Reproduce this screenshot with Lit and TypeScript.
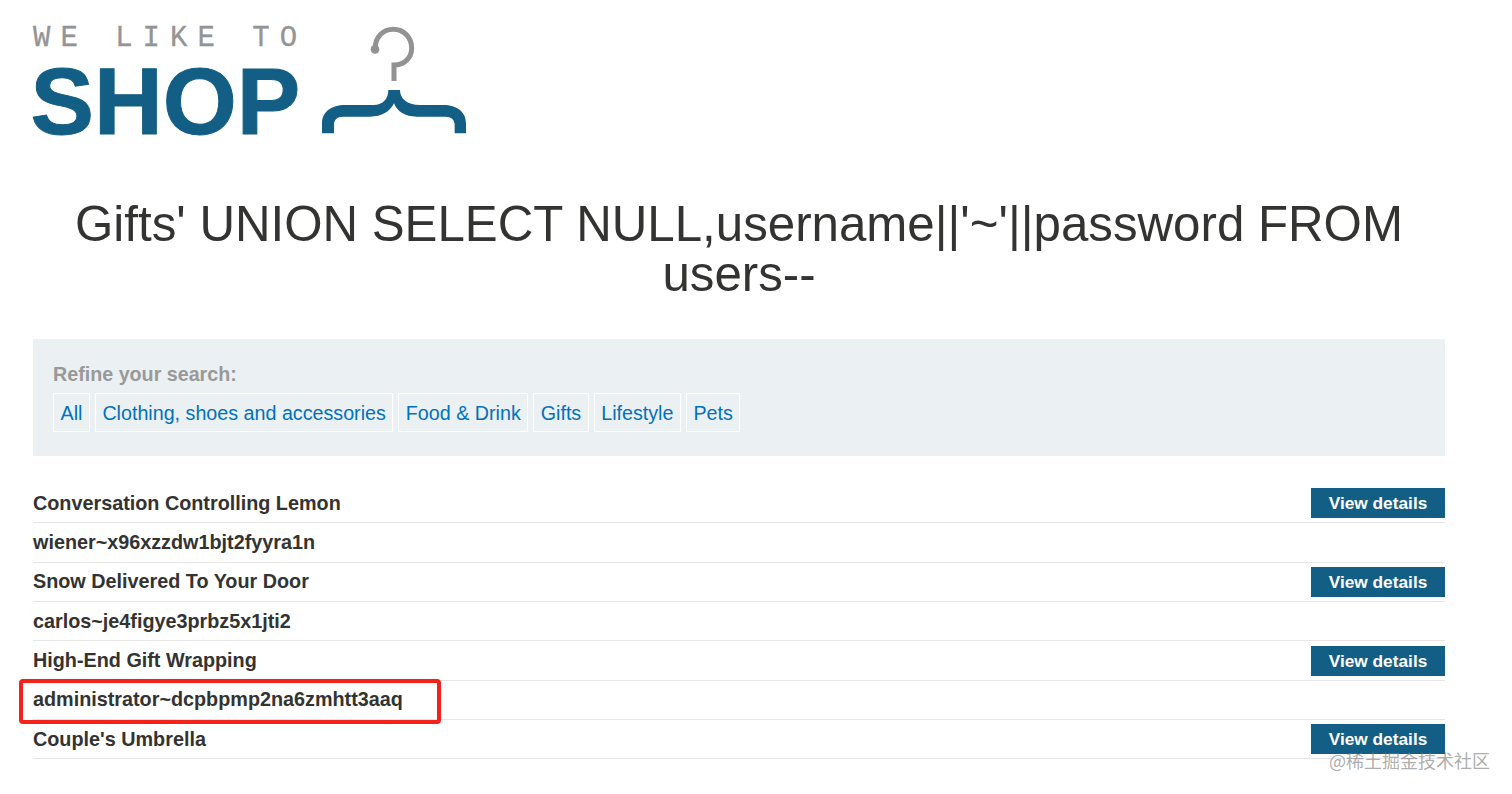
import { LitElement, html, css } from "lit";
import { customElement } from "lit/decorators.js";

const FILTERS = ["All", "Clothing, shoes and accessories", "Food & Drink", "Gifts", "Lifestyle", "Pets"];
const ROWS: { name: string; button: boolean; mark?: boolean }[] = [
  { name: "Conversation Controlling Lemon", button: true },
  { name: "wiener~x96xzzdw1bjt2fyyra1n", button: false },
  { name: "Snow Delivered To Your Door", button: true },
  { name: "carlos~je4figye3prbz5x1jti2", button: false },
  { name: "High-End Gift Wrapping", button: true },
  { name: "administrator~dcpbpmp2na6zmhtt3aaq", button: false, mark: true },
  { name: "Couple's Umbrella", button: true },
];

@customElement("app-root")
export class AppRoot extends LitElement {
  static styles = css`
    :host {
      display: block;
      position: relative;
      height: 794px;
      overflow: hidden;
      background: #fff;
      color: #333332;
      font-family: "Liberation Sans", Arial, sans-serif;
    }
    .page { padding: 0 67px 0 33px; }
    .logo { display: flex; height: 145px; padding-top: 15px; }
    .logo-text { width: 277px; display: flex; flex-direction: column; }
    .we {
      font-family: "Liberation Mono", monospace;
      font-size: 29px;
      line-height: 30px;
      letter-spacing: 10px;
      color: #949494;
      -webkit-text-stroke: 0.3px #949494;
      white-space: nowrap;
      margin-top: 9px;
    }
    .shop {
      font-weight: 700;
      font-size: 95.2px;
      line-height: 78px;
      color: #125e85;
      margin-top: 8px;
      margin-left: -2.5px;
      -webkit-text-stroke: 1px #125e85;
    }
    .hanger { display: block; width: 170px; height: 130px; }
    h1 {
      margin: 38.5px 0 0;
      font-weight: 400;
      font-size: 49.25px;
      line-height: 50.5px;
      text-align: center;
    }
    .filters {
      margin-top: 39.5px;
      height: 117px;
      box-sizing: border-box;
      background: #ebf0f3;
      padding: 24px 20px 0;
    }
    .label { font-weight: 700; font-size: 19.7px; line-height: 22px; color: #999; }
    .links { display: flex; gap: 5px; margin-top: 8px; }
    .links a {
      display: block;
      border: 1px solid #fff;
      padding: 0 6.5px;
      height: 39px;
      line-height: 38px;
      box-sizing: border-box;
      font-size: 19.7px;
      color: #0071bc;
    }
    .table { margin-top: 28px; }
    .row {
      position: relative;
      display: flex;
      align-items: center;
      justify-content: space-between;
      height: 39.35px;
      box-sizing: border-box;
      border-bottom: 1px solid #e6e6e6;
      font-weight: 700;
      font-size: 19.8px;
    }
    .btn {
      width: 134px;
      height: 30px;
      background: #125e85;
      color: #fff;
      font-size: 17.3px;
      line-height: 30px;
      text-align: center;
    }
    .mark {
      position: absolute;
      left: -14px;
      top: -1.4px;
      width: 422px;
      height: 45px;
      box-sizing: border-box;
      border: 4px solid #f5211b;
      border-radius: 4px;
    }
    .watermark {
      position: absolute;
      left: 1329px;
      top: 748px;
      font-family: "Noto Sans CJK SC", sans-serif;
      font-size: 18px;
      line-height: 24px;
      color: rgba(120, 120, 120, 0.62);
      white-space: nowrap;
    }
  `;

  render() {
    return html`
      <div class="page">
        <div class="logo">
          <div class="logo-text">
            <div class="we">WE LIKE TO</div>
            <div class="shop">SHOP</div>
          </div>
          <svg class="hanger" viewBox="0 0 510 390">
            <path
              d="M195 103 C195 65 220 43 250 43 C282 43 305 68 305 100 C305 130 282 150 252 150 L252 198"
              fill="none"
              stroke="#929292"
              stroke-width="15"
            />
            <circle cx="195" cy="103" r="13" fill="#929292" />
            <path
              d="M235 225 L270 225 C270 250 290 270 330 270 L400 270 C440 270 468 290 468 325 L468 355 L434 355 L434 330 C434 315 425 305 405 305 L320 305 C285 305 262 290 252 265 C240 290 215 305 180 305 L100 305 C80 305 72 315 72 330 L72 355 L36 355 L36 325 C36 290 65 270 105 270 L190 270 C220 270 235 250 235 225 Z"
              fill="#125e85"
            />
          </svg>
        </div>
        <h1>Gifts' UNION SELECT NULL,username||'~'||password FROM users--</h1>
        <div class="filters">
          <div class="label">Refine your search:</div>
          <div class="links">${FILTERS.map((f) => html`<a>${f}</a>`)}</div>
        </div>
        <div class="table">
          ${ROWS.map(
            (r) => html`<div class="row">
              <span>${r.name}</span>
              ${r.button ? html`<span class="btn">View details</span>` : ""}
              ${r.mark ? html`<div class="mark"></div>` : ""}
            </div>`
          )}
        </div>
      </div>
      <div class="watermark">@稀土掘金技术社区</div>
    `;
  }
}
